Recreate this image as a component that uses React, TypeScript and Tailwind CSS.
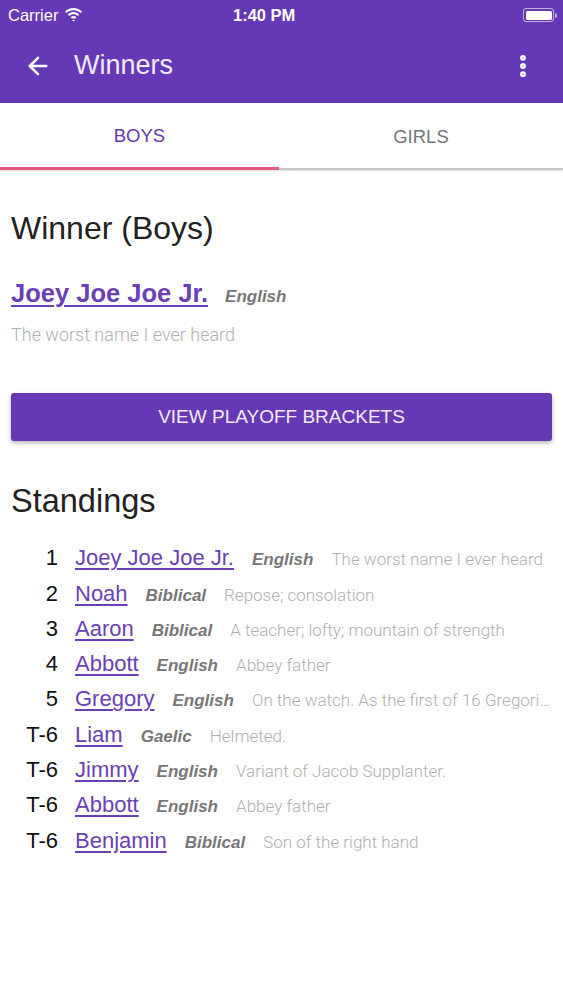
import React from "react";
import { ArrowLeft, MoreVertical } from "lucide-react";

type Standing = {
  rank: string;
  name: string;
  origin: string;
  meaning: string;
};

const standings: Standing[] = [
  { rank: "1", name: "Joey Joe Joe Jr.", origin: "English", meaning: "The worst name I ever heard" },
  { rank: "2", name: "Noah", origin: "Biblical", meaning: "Repose; consolation" },
  { rank: "3", name: "Aaron", origin: "Biblical", meaning: "A teacher; lofty; mountain of strength" },
  { rank: "4", name: "Abbott", origin: "English", meaning: "Abbey father" },
  {
    rank: "5",
    name: "Gregory",
    origin: "English",
    meaning: "On the watch. As the first of 16 Gregorian popes, Gregory the Great",
  },
  { rank: "T-6", name: "Liam", origin: "Gaelic", meaning: "Helmeted." },
  { rank: "T-6", name: "Jimmy", origin: "English", meaning: "Variant of Jacob Supplanter." },
  { rank: "T-6", name: "Abbott", origin: "English", meaning: "Abbey father" },
  { rank: "T-6", name: "Benjamin", origin: "Biblical", meaning: "Son of the right hand" },
];

function WifiIcon() {
  return (
    <svg width="19" height="14" viewBox="0 0 19 14" fill="white">
      <path d="M9.5 2.2c2.7 0 5.2 1 7.1 2.8l1.4-1.5C15.7 1.3 12.7 0 9.5 0S3.3 1.3 1 3.5l1.4 1.5C4.3 3.2 6.8 2.2 9.5 2.2z" />
      <path d="M9.5 6.2c1.6 0 3.1.6 4.3 1.7l1.4-1.5C13.7 5 11.7 4.1 9.5 4.1S5.3 5 3.8 6.4l1.4 1.5C6.4 6.8 7.9 6.2 9.5 6.2z" />
      <path d="M9.5 10.2c.6 0 1.1.2 1.5.6l1.4-1.5c-.8-.7-1.8-1.2-2.9-1.2s-2.1.5-2.9 1.2l1.4 1.5c.4-.4.9-.6 1.5-.6zM9.5 13.6l1.3-1.4c-.3-.3-.8-.5-1.3-.5s-1 .2-1.3.5l1.3 1.4z" />
    </svg>
  );
}

function BatteryIcon() {
  return (
    <div className="flex items-center">
      <div className="flex h-[14px] w-[31px] items-center rounded-[3px] border border-white/60 p-[1.5px]">
        <div className="h-full w-full rounded-[1.5px] bg-white" />
      </div>
      <div className="ml-[1px] h-[5px] w-[2px] rounded-r-sm bg-white/60" />
    </div>
  );
}

function StatusBar() {
  return (
    <div className="relative flex h-[30px] items-center justify-between pl-[8px] pr-[6px] text-[16.5px] text-white">
      <div className="flex items-center gap-[6px]">
        <span>Carrier</span>
        <WifiIcon />
      </div>
      <span className="absolute left-[233px] font-semibold">1:40 PM</span>
      <BatteryIcon />
    </div>
  );
}

export default function App() {
  return (
    <div
      className="min-h-[1000px] w-[563px] bg-white"
      style={{ fontFamily: "'Liberation Sans', Arial, sans-serif" }}
    >
      {/* App bar */}
      <div className="bg-[#6539b5]">
        <StatusBar />
        <div className="flex h-[73px] items-center pl-[24px] pr-[26px] pb-[2px]">
          <ArrowLeft className="h-[28px] w-[28px] text-white" strokeWidth={2.2} />
          <span className="ml-[22px] text-[27px] text-[#f0eaf8]">Winners</span>
          <div className="ml-auto">
            <MoreVertical className="h-[28px] w-[28px] text-white" strokeWidth={3} />
          </div>
        </div>
      </div>

      {/* Tabs */}
      <div className="flex h-[67px] shadow-[0_1px_2px_rgba(0,0,0,0.15)]">
        <div className="flex w-[279px] flex-col">
          <div className="flex flex-1 items-center justify-center pt-[2px] text-[18.5px] text-[#6539b5]">
            BOYS
          </div>
          <div className="h-[3px] bg-[#e8577f]" />
        </div>
        <div className="flex flex-1 flex-col">
          <div className="flex flex-1 items-center justify-center pt-[2px] text-[18.5px] text-[#777]">
            GIRLS
          </div>
          <div className="h-[2px] bg-[#c8c8c8]" />
        </div>
      </div>

      <div className="px-[11px]">
        {/* Winner */}
        <h2 className="mt-[39px] text-[32px] leading-[38px] text-[#222]">Winner (Boys)</h2>
        <div className="mt-[27px] flex items-baseline gap-[17px]">
          <a className="text-[25.5px] font-bold text-[#6a40b8] underline decoration-[2px] underline-offset-[3px]">
            Joey Joe Joe Jr.
          </a>
          <span className="text-[17px] font-bold italic text-[#777]">English</span>
        </div>
        <p
          className="mt-[9px] text-[18px] font-light text-[#b0b0b0]"
          style={{ fontFamily: "Roboto, sans-serif" }}
        >
          The worst name I ever heard
        </p>

        <button className="mt-[45px] flex h-[48px] w-full items-center justify-center rounded-[3px] bg-[#6539b5] text-[19px] text-[#f1ebf9] shadow-[0_2px_4px_rgba(0,0,0,0.3)]">
          VIEW PLAYOFF BRACKETS
        </button>

        {/* Standings */}
        <h2 className="mt-[41px] text-[32.5px] leading-[38px] text-[#222]">Standings</h2>
        <div className="mt-[21px] flex flex-col">
          {standings.map((s, i) => (
            <div key={i} className="flex h-[35.3px] items-baseline whitespace-nowrap">
              <span className="w-[47px] shrink-0 text-right text-[22px] text-[#111]">{s.rank}</span>
              <a className="ml-[17px] shrink-0 text-[22px] text-[#6a40b8] underline underline-offset-[3px]">
                {s.name}
              </a>
              <span className="ml-[18px] shrink-0 text-[17px] font-bold italic text-[#777]">
                {s.origin}
              </span>
              <span
                className="ml-[18px] min-w-0 truncate text-[17px] font-light text-[#b0b0b0]"
                style={{ fontFamily: "Roboto, sans-serif" }}
              >
                {s.meaning}
              </span>
            </div>
          ))}
        </div>
      </div>
    </div>
  );
}
